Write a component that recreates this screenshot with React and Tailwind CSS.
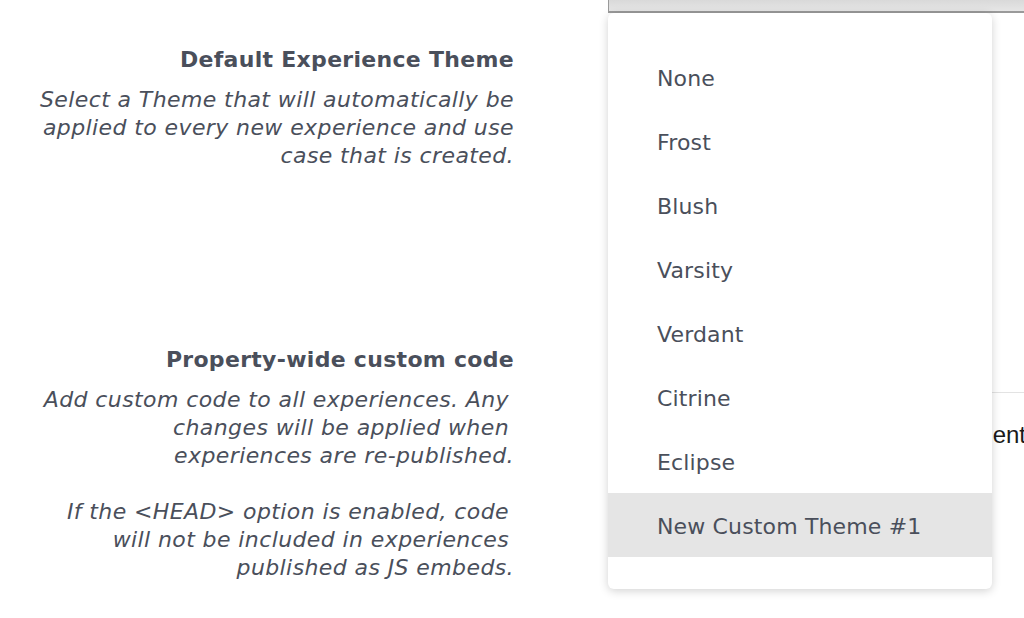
const THEMES = ['None', 'Frost', 'Blush', 'Varsity', 'Verdant', 'Citrine', 'Eclipse', 'New Custom Theme #1']

export default function App() {
  const font = { fontFamily: '"DejaVu Sans", "Open Sans", sans-serif' }

  return (
    <div className="relative h-[618px] w-[1024px] overflow-hidden bg-white text-[#4a4f5b]" style={font}>
      <div className="flex">
        {/* Labels */}
        <div className="w-[514px] shrink-0 text-right">
          <div className="pt-[45px]">
            <h2 className="text-[22px] font-bold leading-[30px] tracking-[0.3px]">Default Experience Theme</h2>
            <p className="mt-[11px] text-[22px] italic leading-[28px] tracking-[0.4px]">
              Select a Theme that will automatically be<br />
              applied to every new experience and use<br />
              case that is created.
            </p>
          </div>
          <div className="pt-[175px]">
            <h2 className="text-[22px] font-bold leading-[30px] tracking-[0.3px]">Property-wide custom code</h2>
            <div className="mt-[11px] pr-[5px] text-[22px] italic leading-[28px] tracking-[0.4px]">
              <p>
                Add custom code to all experiences. Any<br />
                changes will be applied when<br />
                <span className="mr-[-5px]">experiences are re-published.</span>
              </p>
              <p className="mt-[28px]">
                If the &lt;HEAD&gt; option is enabled, code<br />
                will not be included in experiences<br />
                <span className="mr-[-5px]">published as JS embeds.</span>
              </p>
            </div>
          </div>
        </div>

        {/* Controls behind the menu */}
        <div className="ml-[94px] flex-1">
          <div className="h-[13px] border-b-2 border-l border-[#9a9a9a] bg-gradient-to-b from-[#d9d9d9] to-[#e6e6e6]" />
          <div className="mt-[379px] border-t border-[#e3e3e3]" />
          <div className="mt-[24px] flex justify-end whitespace-nowrap text-[24px] text-[#1a1a1a]" style={{ fontFamily: '"Liberation Sans", Arial, sans-serif' }}>
            <span className="mr-[-2px]">Include in every experiment</span>
          </div>
        </div>
      </div>

      {/* Theme menu */}
      <ul className="absolute left-[608px] top-[13px] w-[384px] rounded-md bg-white py-[32px] shadow-[0_2px_10px_rgba(0,0,0,0.18)]">
        {THEMES.map((t, i) => (
          <li
            key={t}
            className={`flex h-[64px] items-center pl-[49px] pt-[3px] text-[22px] tracking-[0.15px] ${i === THEMES.length - 1 ? 'bg-[#e5e5e5]' : ''}`}
          >
            {t}
          </li>
        ))}
      </ul>
    </div>
  )
}
